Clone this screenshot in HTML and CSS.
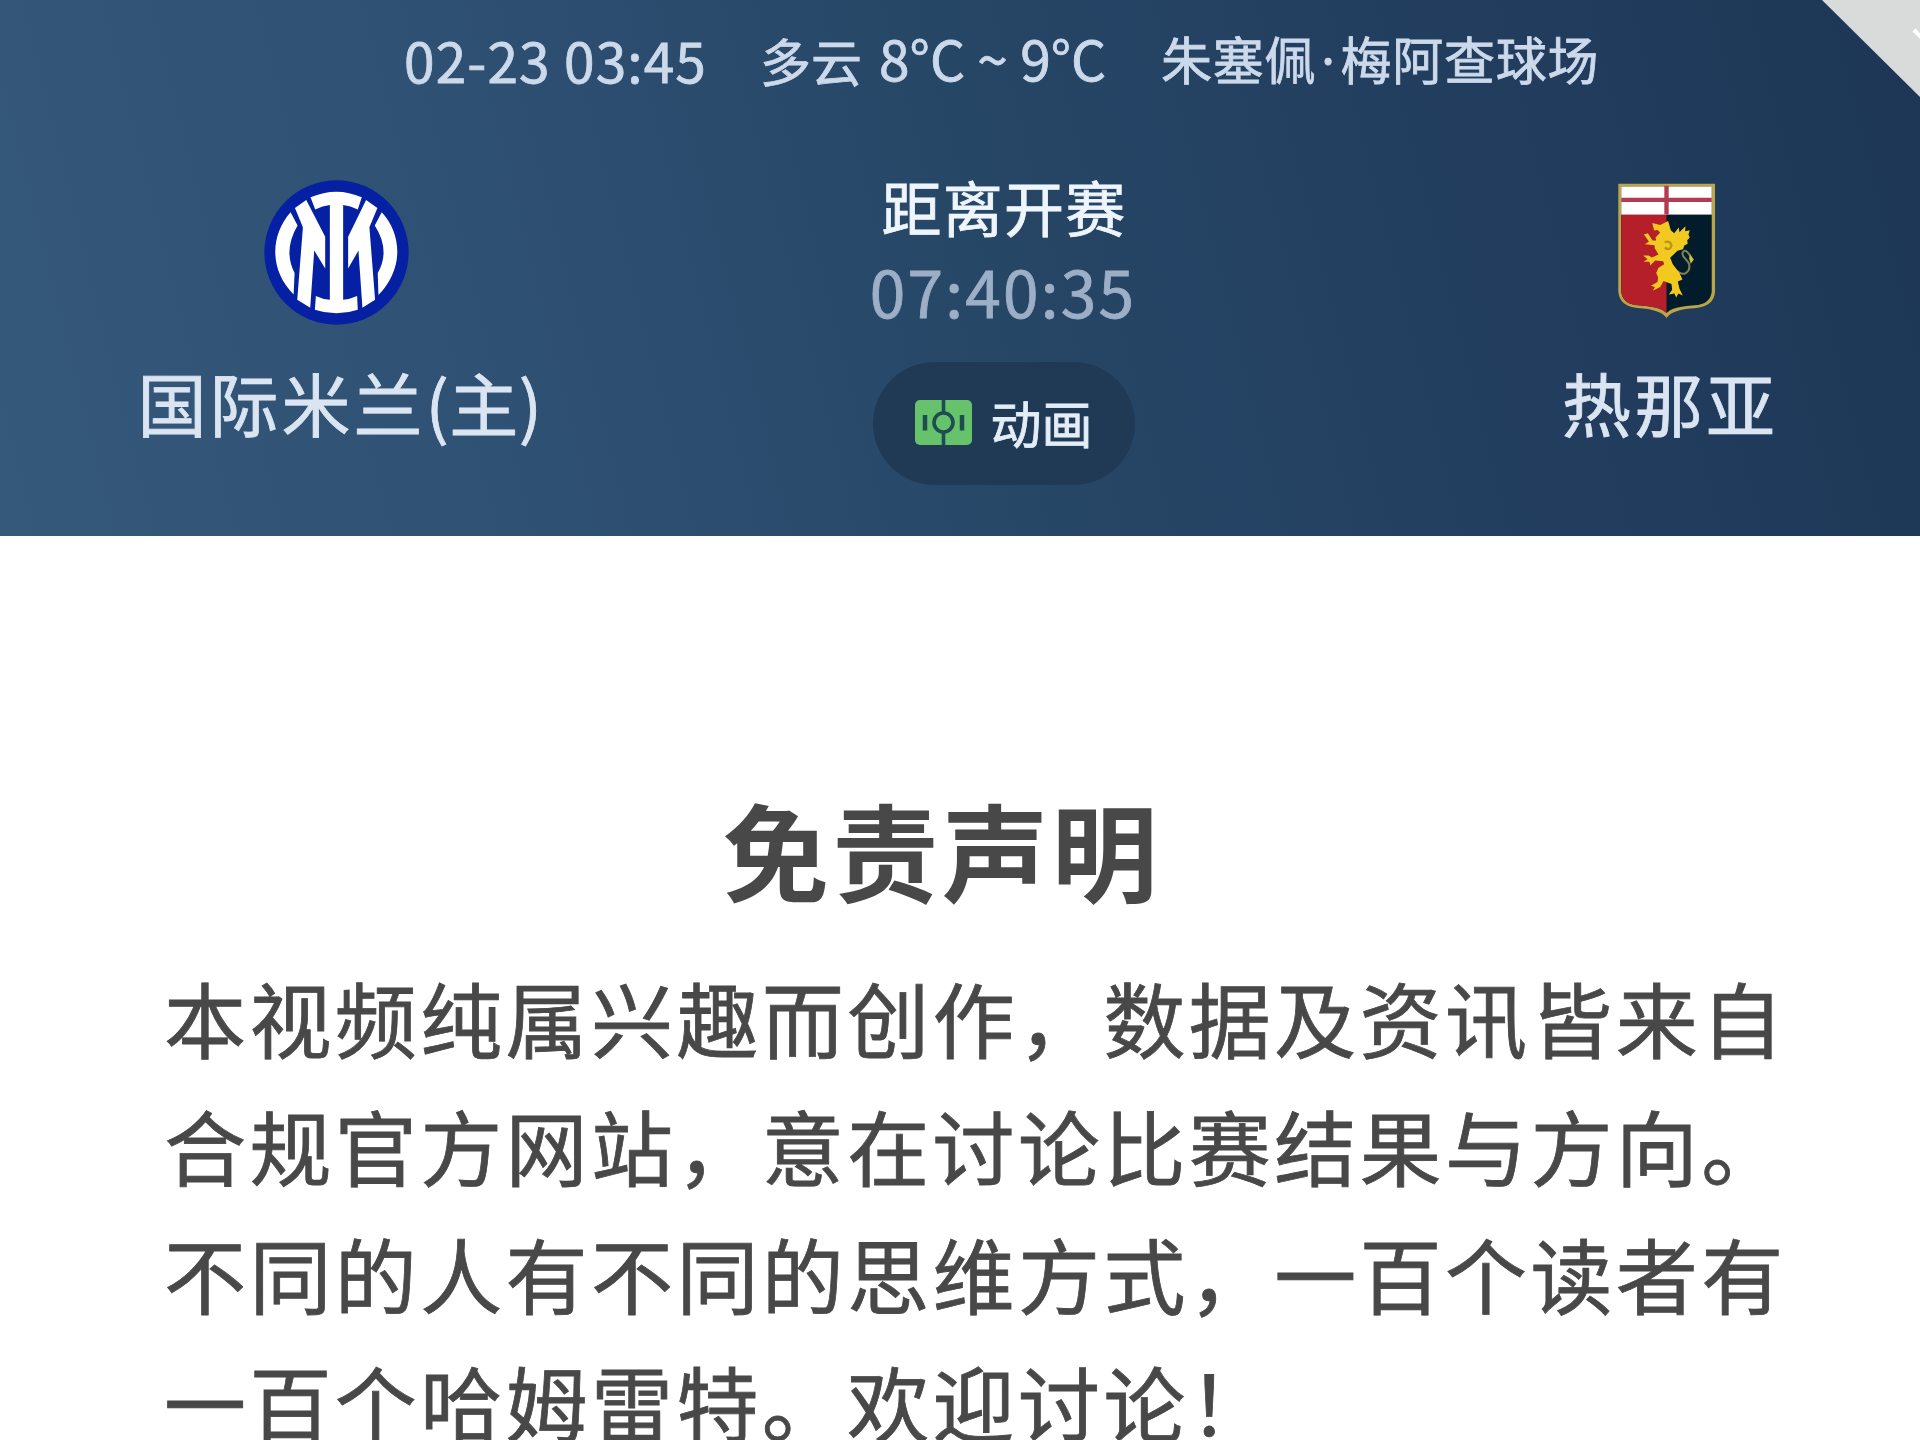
FILE: index.html
```html
<!DOCTYPE html>
<html lang="zh-CN">

<head>
  <meta charset="UTF-8" />
  <title>国际米兰 - 热那亚</title>
  <meta name="viewport" content="width=device-width, initial-scale=1.0" />
  <link rel="stylesheet" href="styles.css">
</head>

<body>
  <header class="match">
    <!-- 右上角折角 -->
    <svg class="corner" viewBox="0 0 98 97">
      <path d="M0 0H98V97Z" fill="#d9dbda" />
      <path d="M92 30L100 38" stroke="#fff" stroke-width="4" />
    </svg>

    <div class="info">
      <span class="date">02-23 03:45</span>
      <span class="weather">多云<span class="temp">8°C ~ 9°C</span></span>
      <span class="stadium">朱塞佩<i class="dot">·</i>梅阿查球场</span>
    </div>

    <div class="teams">
      <div class="team">
        <!-- 国际米兰队徽 -->
        <svg class="logo-inter" viewBox="44 44 436 436">
          <circle cx="262" cy="262" r="217" fill="#0520a2" />
          <g fill="#fff">
            <path d="M184 96Q262 62 338 96L326 133Q304 121 282 119V404Q302 403 324 393L326 434Q262 456 197 434L200 393Q220 403 242 404V119Q220 121 198 133Z" />
            <path d="M137 128L171 104L228 215V310L195 256L183 428L144 404L161 186Z" />
            <path d="M385 128L351 104L297 215V310L328 256L340 428L378 404L361 186Z" />
            <path d="M124 141L145 181Q101 255 136 324L133 388C60 315 62 211 124 141Z" />
            <path d="M398 141L377 181Q425 255 386 324L388 390C462 315 462 211 398 141Z" />
          </g>
        </svg>
        <div class="name">国际米兰<span class="home">(主)</span></div>
      </div>

      <div class="status">
        <div class="label">距离开赛</div>
        <div class="countdown">07:40:35</div>
        <button class="anim-btn">
          <svg class="pitch" viewBox="0 0 57 45">
            <rect width="57" height="45" rx="5" fill="#66c36c" />
            <g fill="none" stroke="#1f4c50" stroke-width="3.6">
              <path d="M28.500 0V13M28.500 32V45" />
              <circle cx="28.500" cy="22.500" r="9.500" />
              <path d="M10 15V30.500M47 15V30.500" stroke-width="4.500" />
            </g>
          </svg>
          <span>动画</span>
        </button>
      </div>

      <div class="team away">
        <!-- 热那亚队徽 -->
        <svg class="logo-genoa" viewBox="80 55 302 412">
          <path d="M86 60H377V385Q374 428 320 434Q248 438 231 464Q214 438 142 434Q90 428 86 385Z" fill="#b9a648" />
          <path d="M95 69H367V384Q364 422 315 426Q250 430 231 449Q212 430 147 426Q98 422 95 384Z" fill="#021c2b" />
          <path d="M95 152H231V449Q212 430 147 426Q98 422 95 384Z" fill="#b51f2a" />
          <rect x="95" y="69" width="272" height="84" fill="#fff" />
          <path d="M231 66V153M95 109H367" stroke="#b33a50" stroke-width="13" />
          <path d="M262 322C282 342 304 325 299 302C294 285 274 282 280 266Q286 256 296 268L304 280" fill="none" stroke="#7d8356" stroke-width="6" />
          <path d="M302 272L313 288L304 301L299 284Z" fill="#d6c13e" />
          <path d="M188 178L212 184L236 172L244 200L254 209L268 192L270 206L288 188L287 203L301 200L297 213L301 222L293 231L295 240L284 247L281 257L264 262L242 283L250 302L270 329L279 348L265 354L270 376L280 396L267 390L260 402L255 390L238 393L248 379L246 362L222 353L212 371L190 382L196 371L184 367L204 356L206 342L200 329L207 313L224 302L221 293L197 291L182 306L180 295L162 295L174 287L161 276L177 276L187 282L207 273L196 255L195 245L166 242L178 234L163 213L175 209L189 231L200 231L198 222L212 207L204 199L194 201Z" fill="#f1c91f" />
          <path d="M226 236Q242 230 246 246Q240 264 226 252" fill="none" stroke="#b59616" stroke-width="7" />
        </svg>
        <div class="name">热那亚</div>
      </div>
    </div>
  </header>

  <main class="notice">
    <h1>免责声明</h1>
    <p>
      本视频纯属兴趣而创作，数据及资讯皆来自<br />
      合规官方网站，意在讨论比赛结果与方向。<br />
      不同的人有不同的思维方式，一百个读者有<br />
      一百个哈姆雷特。欢迎讨论！
    </p>
  </main>
</body>

</html>
```
FILE: styles.css
```css
body {
  margin: 0;
  height: 1440px;
  overflow: hidden;
  background: #fff;
  font-family: "Noto Sans CJK SC", sans-serif;
  /* 笔画稍微加粗 */
  -webkit-text-stroke: 0.8px currentColor;
}

.match {
  position: relative;
  height: 536px;
  overflow: hidden;
  background: linear-gradient(76deg, #35597a 0%, #2f5174 25%, #274767 50%, #233f60 72%, #1d3656 100%);
  color: #dbe5f2;
}

.corner {
  position: absolute;
  top: 0;
  right: 0;
  width: 98px;
  height: 97px;
}

.info {
  display: flex;
  height: 120px;
  padding-left: 404px;
  align-items: center;
  font-size: 51px;
  line-height: 114px;
  white-space: nowrap;
  color: #ccd9ea;
}

.info span {
  position: relative;
  top: -1px;
}

.date {
  width: 356px;
  font-size: 55px;
  letter-spacing: 1.1px;
}

.weather {
  width: 401px;
}

.temp {
  margin-left: 17px;
  font-size: 55px;
}

.stadium {
  letter-spacing: 0.8px;
}

.dot {
  display: inline-block;
  width: 24px;
  font-family: "Noto Sans", sans-serif;
  font-style: normal;
  text-align: center;
}

.teams {
  display: grid;
  grid-template-columns: 680px 646px 680px;
}

.team {
  display: flex;
  flex-direction: column;
  align-items: center;
  padding-top: 60px;
}

.logo-inter {
  width: 145px;
  height: 145px;
  margin-right: 7px;
}

.logo-genoa {
  width: 101px;
  height: 137px;
  margin: 2px 0 6px;
}

.name {
  margin-top: 32px;
  font-size: 69px;
  line-height: 90px;
  letter-spacing: 3px;
  white-space: nowrap;
}

.home {
  letter-spacing: 0.5px;
}

.away .name {
  padding-left: 8px;
}

.status {
  display: flex;
  flex-direction: column;
  align-items: center;
}

.label {
  margin-top: 49px;
  padding-left: 2px;
  font-size: 60px;
  line-height: 74px;
  letter-spacing: 1.3px;
  color: #eef5fc;
}

.countdown {
  margin-top: 10px;
  font-size: 64px;
  line-height: 74px;
  letter-spacing: 2.2px;
  color: #9dafc7;
}

/* 动画按钮 */
.anim-btn {
  display: flex;
  align-items: center;
  justify-content: center;
  gap: 18px;
  width: 262px;
  height: 123px;
  margin: 35px 0 0 2px;
  padding: 0 0 3px;
  border: none;
  border-radius: 62px;
  background: #203a55;
  color: #e3edf7;
  font-family: inherit;
  font-size: 51px;
  line-height: 60px;
}

.pitch {
  width: 57px;
  height: 45px;
}

.notice {
  padding-left: 164px;
  color: #484848;
}

h1 {
  width: 1556px;
  margin: 252px 0 0;
  font-size: 106px;
  line-height: 120px;
  letter-spacing: 3.6px;
  text-align: center;
  -webkit-text-stroke: 0;
}

.notice p {
  margin: 45px 0 0;
  font-size: 82px;
  line-height: 128px;
  letter-spacing: 3.4px;
  white-space: nowrap;
}
```
